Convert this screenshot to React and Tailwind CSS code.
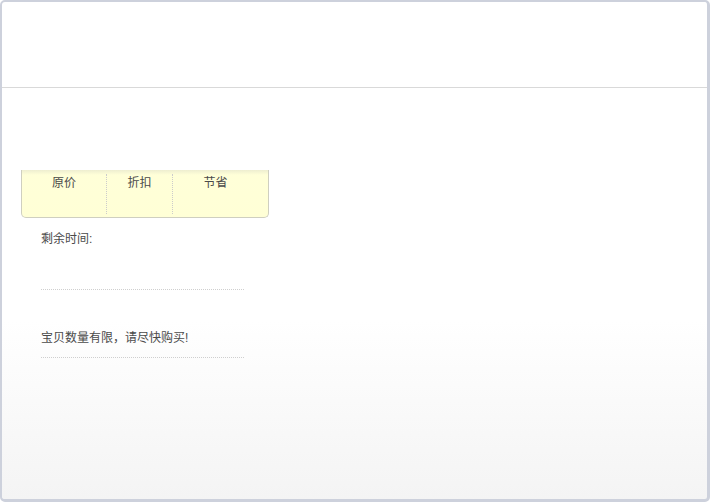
import React from 'react'

const cols = [
    { label: "原价", w: "w-[85px]" },
    { label: "折扣", w: "w-[66px]" },
    { label: "节省", w: "flex-1 pr-[10px]" },
]

const App = () => {
    return (
        <div
            className="w-[710px] h-[502px] overflow-hidden rounded-[5px] border-l-2 border-t-2 border-r-[3px] border-b-[3px] border-[#cdd1dc] bg-[linear-gradient(to_bottom,#ffffff_0%,#ffffff_64%,#f4f4f4_100%)] text-[12px] text-[#4a4a4a]"
            style={{ fontFamily: '"Liberation Sans", "Noto Sans CJK SC", sans-serif' }}
        >
            {/* header */}
            <div className="h-[86px] border-b border-[#d9d9d9]"></div>

            {/* body */}
            <div className="pt-[82px] pl-[19px]">
                <div className="w-[248px] h-[48px] flex rounded-b-[5px] border-l border-r border-b border-[#cfcfc0] bg-[linear-gradient(to_bottom,#eeeed0_0px,#ffffd8_5px,#ffffd6_100%)] pt-[4px] pb-[3px]">
                    {cols.map((c, i) => (
                        <div
                            key={c.label}
                            className={`${c.w} h-full text-center leading-[18px] ${i < 2 ? "border-r border-dotted border-[#cccccc]" : ""}`}
                        >
                            {c.label}
                        </div>
                    ))}
                </div>

                <div className="pl-[20px] w-[223px]">
                    <div className="mt-[12px] leading-[18px]">剩余时间:</div>
                    <div className="h-[42px] border-b border-dotted border-[#cfcfcf]"></div>
                    <div className="mt-[39px] leading-[18px]">宝贝数量有限，请尽快购买!</div>
                    <div className="h-[11px] border-b border-dotted border-[#cfcfcf]"></div>
                </div>
            </div>
        </div>
    )
}

export default App
